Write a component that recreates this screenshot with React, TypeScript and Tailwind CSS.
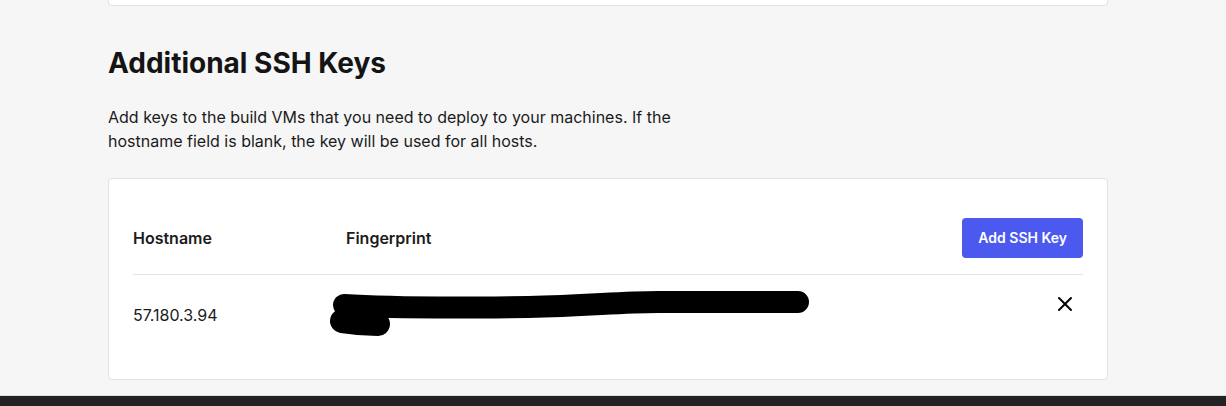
import { X } from "lucide-react";

type SshKey = {
  hostname: string;
  fingerprint: string;
};

const keys: SshKey[] = [
  { hostname: "57.180.3.94", fingerprint: "SHA256:redacted" },
];

function Redacted() {
  // hand-drawn black marker over the fingerprint
  return (
    <svg
      className="absolute -left-[18px] -top-[4px]"
      width="492"
      height="52"
      viewBox="0 0 492 52"
      fill="none"
    >
      <path
        d="M16 17 C 60 20, 120 20, 200 19 C 260 18, 290 14, 330 14 L 470 14"
        stroke="black"
        strokeWidth="22"
        strokeLinecap="round"
      />
      <path
        d="M14 33 L 30 35 L 50 36"
        stroke="black"
        strokeWidth="24"
        strokeLinecap="round"
      />
    </svg>
  );
}

export default function App() {
  return (
    <div className="flex h-[406px] flex-col bg-[#f6f6f6] font-['Inter',sans-serif] text-[#1b1b1b]">
      <div className="ml-[108px] w-[1000px] flex-1">
        <div className="h-[6px] rounded-b-[4px] border-x border-b border-[#e2e2e2] bg-white" />

        <h2 className="mt-[39px] text-[28px] leading-9 font-bold text-[#141414]">
          Additional SSH Keys
        </h2>
        <p className="mt-6 max-w-xl text-base leading-6">
          Add keys to the build VMs that you need to deploy to your machines. If the
          hostname field is blank, the key will be used for all hosts.
        </p>

        <div className="mt-[25px] rounded-[4px] border border-[#e2e2e2] bg-white px-6 pt-6 pb-6">
          <div className="flex items-center pt-[15px] pb-4">
            <div className="w-[213px] font-semibold">Hostname</div>
            <div className="flex-1 font-semibold">Fingerprint</div>
            <button className="h-10 rounded-[4px] bg-[#4b59ef] px-4 text-sm font-semibold text-white">
              Add SSH Key
            </button>
          </div>

          {keys.map((key) => (
            <div
              key={key.hostname}
              className="flex border-t border-[#e5e5e5] pt-[17px] pb-[15px]"
            >
              <div className="w-[213px] self-center pb-[3px]">{key.hostname}</div>
              <div className="relative h-12 flex-1">
                <Redacted />
              </div>
              <button className="mr-1 flex h-6 w-7 items-center justify-center text-black">
                <X size={24} strokeWidth={2} />
              </button>
            </div>
          ))}
        </div>
      </div>
      <div className="h-px bg-[#dcdcdc]" />
      <div className="h-[10px] bg-[#222222]" />
    </div>
  );
}
